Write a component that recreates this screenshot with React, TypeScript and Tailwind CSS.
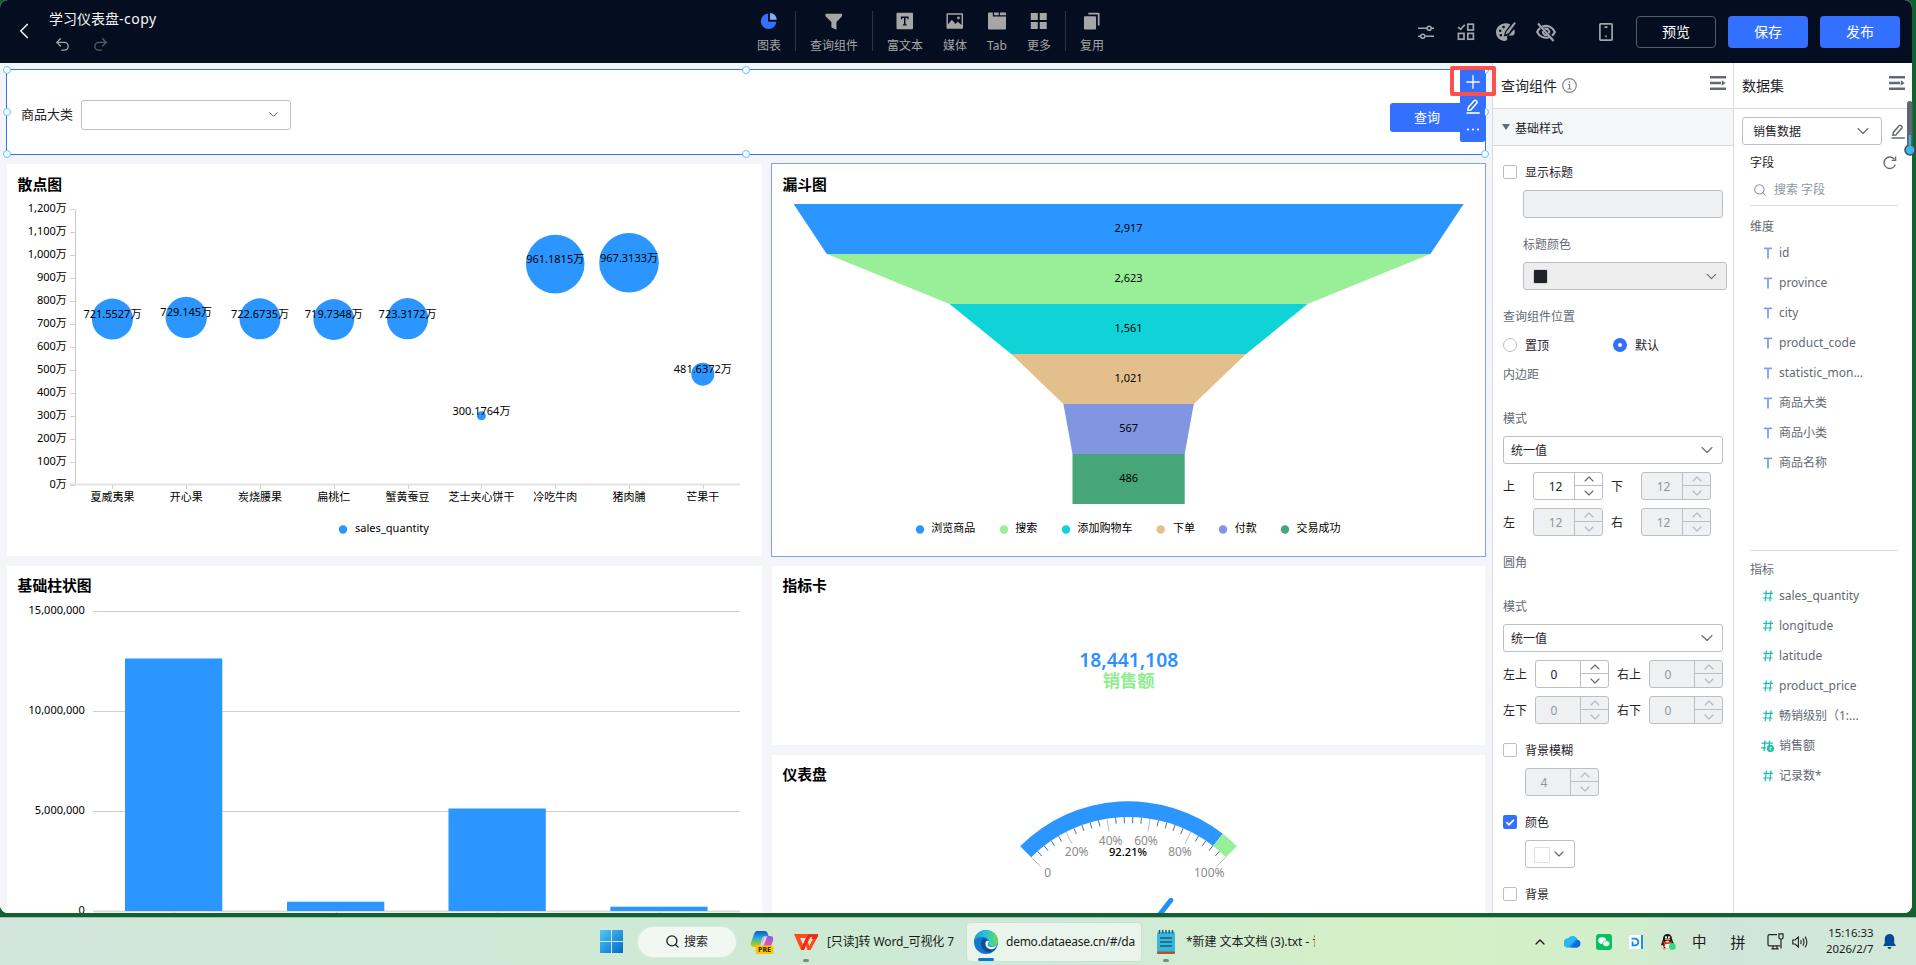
import React from "react";
import { ChevronDown, ChevronUp, ChevronLeft, Search, Undo2, Redo2 } from "lucide-react";

const FONT = "font-['Noto_Sans','Noto_Sans_CJK_SC',sans-serif]";

type LabelProps = {
  x: number;
  y: number;
  children: React.ReactNode;
  size?: number;
  anchor?: "start" | "middle" | "end";
  fill?: string;
  weight?: number;
  length?: number;
};

/** Chart label whose y is the vertical middle of the glyphs. */
function Label({ x, y, children, size = 11, anchor = "middle", fill = "#000", weight = 400, length }: LabelProps) {
  return (
    <text
      x={x}
      y={y + size * 0.36}
      fontSize={size}
      textAnchor={anchor}
      fill={fill}
      fontWeight={weight}
      textLength={length}
      lengthAdjust="spacingAndGlyphs"
    >
      {children}
    </text>
  );
}

/* ---------- top bar ---------- */

const toolIcons: Record<string, React.ReactNode> = {
  chart: (
    <>
      <path d="M8.3 1.2A8 8 0 1 0 16.8 9.8H8.3Z" fill="#3370ff" />
      <path d="M10.3 0.8V7.8H17.3A7.4 7.4 0 0 0 10.3 0.8Z" fill="#8ba9f7" />
    </>
  ),
  filter: <path d="M0.5 1.5H17.5V4L11.8 10V18L6.6 15.6V10L0.5 4Z" />,
  text: (
    <path fillRule="evenodd" d="M1.5 0.5H16.5Q17.5.5 17.5 1.5V16.5Q17.5 17.5 16.5 17.5H1.5Q.5 17.5.5 16.5V1.5Q.5.5 1.5.5ZM5 4.4V7.2H6.4V6H8.2V12.4H7V13.6H11V12.4H9.8V6H11.6V7.2H13V4.4Z" />
  ),
  media: (
    <path fillRule="evenodd" d="M1.5 1H16.5Q17.5 1 17.5 2V16Q17.5 17 16.5 17H1.5Q.5 17 .5 16V2Q.5 1 1.5 1ZM2 2.5V12.5L6 7.8L9.8 12L12 9.8L16 13V2.5ZM12.8 4.4A1.4 1.4 0 1 1 12.8 7.2A1.4 1.4 0 1 1 12.8 4.4Z" />
  ),
  tab: <path d="M0 1Q0 .2.8.2H5V4.4H18.5V16.8Q18.5 17.8 17.5 17.8H1Q0 17.8 0 16.8ZM6.2.2H11V3.2H6.2ZM12.2.2H17.6Q18.5.2 18.5 1V3.2H12.2Z" />,
  more: <path d="M.8.8H8V8H.8ZM10 .8H17.2V8H10ZM.8 10H8V17.2H.8ZM10 10H17.2V17.2H10Z" />,
  reuse: (
    <>
      <rect x="1" y="4" width="12.4" height="13.8" rx="0.8" />
      <path d="M5.5 0.4H16Q17 .4 17 1.4V13.5H15.2V2.2H5.5Z" />
    </>
  ),
};

function Tool({ icon, label, width }: { icon: string; label: string; width: string }) {
  return (
    <div className={`flex flex-col items-center ${width}`}>
      <svg width="18" height="18" viewBox="0 0 18.5 18" fill="#a6a6a6" className="mt-3">
        {toolIcons[icon]}
      </svg>
      <span className="mt-[7px] text-xs leading-[17px] whitespace-nowrap text-[#a6a6a6]">{label}</span>
    </div>
  );
}

function Divider() {
  return <div className="mt-[11px] h-10 w-px bg-[#2b3241]" />;
}

function TopBar() {
  return (
    <header className="flex h-[63px] shrink-0 bg-[#050e21]">
      <div className="flex w-[756px]">
        <ChevronLeft className="mt-[18px] ml-[11px] h-[26px] w-[26px] text-[#ebebeb]" strokeWidth={1.6} />
        <div className="ml-3 flex flex-col">
          <div className="mt-[9px] text-sm leading-5 text-[#f5f5f5]">
            学习仪表盘<span className="tracking-[0.5px]">-copy</span>
          </div>
          <div className="mt-[7px] ml-[5px] flex gap-[21px]">
            <Undo2 className="h-[17px] w-[17px] text-[#a6a6a6]" strokeWidth={1.9} />
            <Redo2 className="h-[17px] w-[17px] text-[#5a5c60]" strokeWidth={1.9} />
          </div>
        </div>
      </div>
      <div className="flex w-[670px]">
        <Tool icon="chart" label="图表" width="w-[26px] ml-0" />
        <div className="w-[13px]" />
        <Divider />
        <Tool icon="filter" label="查询组件" width="w-[76px]" />
        <Divider />
        <Tool icon="text" label="富文本" width="w-[64px]" />
        <Tool icon="media" label="媒体" width="w-[36px]" />
        <Tool icon="tab" label="Tab" width="w-[48px]" />
        <Tool icon="more" label="更多" width="w-[36px]" />
        <div className="w-[8px]" />
        <Divider />
        <Tool icon="reuse" label="复用" width="w-[52px]" />
      </div>
      <div className="-ml-[9px] flex h-[63px] items-center text-[#a0a4ab]">
        <svg width="18" height="18" viewBox="0 0 18 18" fill="none" stroke="currentColor" strokeWidth="1.6">
          <path d="M1 5.2H10M14.5 5.2H17M1 13.2H3.5M8.2 13.2H17" />
          <circle cx="12.2" cy="5.2" r="2" />
          <circle cx="5.8" cy="13.2" r="2" />
        </svg>
        <svg className="ml-[22px]" width="18" height="18" viewBox="0 0 18 18" fill="none" stroke="currentColor" strokeWidth="1.7">
          <path d="M1 4L3.6 6.4L7.8 1.8" />
          <rect x="10.8" y="1.2" width="5.6" height="5.8" />
          <rect x="1.4" y="10.4" width="5.6" height="5.8" />
          <rect x="10.8" y="10.4" width="5.6" height="5.8" />
        </svg>
        <svg className="ml-[21px]" width="20" height="20" viewBox="0 0 20 20" fill="currentColor">
          <path fillRule="evenodd" d="M14.4 2.4C8-.8 0 3.6 0 10.2C0 15 4 19 8.8 19C11 19 11.6 17.6 11 16C10.6 14.6 11.6 13.6 13 13.6H16.4C18.8 13.6 19.4 10 18.2 7.2L12.6 13.6L7.8 14.6L9.2 9.6L14.4 2.4ZM4.2 7.4A1.3 1.3 0 1 0 4.2 10A1.3 1.3 0 1 0 4.2 7.4ZM7.6 3.8A1.3 1.3 0 1 0 7.6 6.4A1.3 1.3 0 1 0 7.6 3.8ZM4.8 12A1.3 1.3 0 1 0 4.8 14.6A1.3 1.3 0 1 0 4.8 12Z" />
          <path d="M18.4 0L19.8 1.2L12.6 11.2L9.7 12.6L10.4 9.8Z" />
        </svg>
        <svg className="ml-[20px]" width="20" height="20" viewBox="0 0 20 20" fill="none" stroke="currentColor" strokeWidth="2.2">
          <path d="M6.4 4.6C11.6 2.6 16.6 5.4 18.8 10C18.2 11.4 17.2 12.6 16 13.6M13 15.2C8 16.8 3.4 14.4 1.2 10C1.8 8.6 2.8 7.2 4.2 6.2" />
          <path d="M8.4 6.8C11 5.8 13.8 8 13.2 11.4M11 13.2C8.6 13.6 6.6 11.6 6.8 9.2" />
          <path d="M2 1.4L17.6 19" />
        </svg>
        <svg className="ml-[43px]" width="14" height="18" viewBox="0 0 14 18" fill="none" stroke="currentColor" strokeWidth="1.7">
          <rect x="0.9" y="0.9" width="12.2" height="16.2" rx="0.8" />
          <path d="M5.5 4.2H8.5M6.2 13.4H7.8" />
        </svg>
        <button className="ml-[23px] h-8 w-20 rounded border border-[#555b67] text-sm text-white">预览</button>
        <button className="ml-3 h-8 w-20 rounded bg-[#3370ff] text-sm text-white">保存</button>
        <button className="ml-3 h-8 w-20 rounded bg-[#3370ff] text-sm text-white">发布</button>
      </div>
    </header>
  );
}

/* ---------- canvas ---------- */

const handles = [
  "-left-1 -top-1",
  "-left-1 top-[38px]",
  "-left-1 -bottom-1",
  "left-[735px] -top-1",
  "left-[735px] -bottom-1",
  "-right-1 -top-1",
  "-right-1 top-[38px]",
  "-right-1 -bottom-1",
];

function PencilIcon({ className }: { className?: string }) {
  return (
    <svg className={className} width="14" height="15" viewBox="0 0 14 15" fill="none" stroke="currentColor" strokeWidth="1.5">
      <path d="M8.3 1.6Q9 .8 9.8 1.5L10.8 2.4Q11.5 3.1 10.8 4L4.8 11L1.9 11.2L2.3 8.4Z" />
      <path d="M0.5 14H13.8" strokeWidth="1.6" />
    </svg>
  );
}

function QueryBar() {
  return (
    <div className="relative flex h-[86px] w-[1480px] items-center border border-[#3370ff] bg-white">
      <span className="mt-[6px] ml-[14px] w-[53px] text-[13px] whitespace-nowrap text-[#1f2329]">商品大类</span>
      <div className="mt-[5px] ml-[7px] flex h-[30px] w-[210px] items-center justify-end rounded-[3px] border border-[#bbbfc4] pr-[9px]">
        <ChevronDown className="h-[15px] w-[15px] text-[#646a73]" strokeWidth={1.6} />
      </div>
      <div className="mt-[11px] mr-[9px] ml-auto flex h-[29px] w-[86px] items-center rounded-[3px] bg-[#3370ff] pl-6 text-[13px] text-white">
        查询
      </div>
      {handles.map((p) => (
        <i key={p} className={`absolute h-2 w-2 rounded-full border border-[#59c7f9] bg-white ${p}`} />
      ))}
      <div className="absolute -top-px right-0 flex h-[73px] w-[25px] flex-col items-center rounded-[2px] bg-[#3370ff] text-white">
        <svg className="mt-[6px]" width="14" height="14" viewBox="0 0 14 14" stroke="currentColor" strokeWidth="1.3">
          <path d="M7 .3V13.7M.3 7H13.7" />
        </svg>
        <PencilIcon className="mt-[10px]" />
        <svg className="mt-[14px]" width="14" height="3" viewBox="0 0 14 3" fill="currentColor">
          <circle cx="2" cy="1.5" r="1.1" />
          <circle cx="7" cy="1.5" r="1.1" />
          <circle cx="12" cy="1.5" r="1.1" />
        </svg>
      </div>
      <div className="absolute -top-1 -right-[11px] h-[30px] w-[46px] rounded-[2px] border-4 border-[#ff5050]" />
    </div>
  );
}

const points: [string, number, string, number][] = [
  ["夏威夷果", 721.5527, "721.5527万", 20.5],
  ["开心果", 729.145, "729.145万", 20.7],
  ["炭烧腰果", 722.6735, "722.6735万", 20.5],
  ["扁桃仁", 719.7348, "719.7348万", 20.4],
  ["蟹黄蚕豆", 723.3172, "723.3172万", 20.6],
  ["芝士夹心饼干", 300.1764, "300.1764万", 4.5],
  ["冷吃牛肉", 961.1815, "961.1815万", 29.3],
  ["猪肉脯", 967.3133, "967.3133万", 29.8],
  ["芒果干", 481.6372, "481.6372万", 11.5],
];

function ScatterCard() {
  const step = 22.95;
  const base = 484.7;
  return (
    <svg className="block bg-white" width="755" height="392" viewBox="7 164 755 392">
      <Label x={17.6} y={184.5} size={14.8} anchor="start" weight={700}>散点图</Label>
      <path d="M75.5 209.5V484.5" stroke="#c8c8c8" />
      <path d="M70 484.5H740" stroke="#e3e3e3" strokeWidth="2" />
      {Array.from({ length: 13 }, (_, i) => (
        <g key={i}>
          <path d={`M70 ${Math.round(base - i * step) + 0.5}H75`} stroke="#d0d0d0" />
          <Label x={66.8} y={base - i * step - 1} anchor="end">
            {i === 0 ? "0万" : `${(i * 100).toLocaleString("en-US")}万`}
          </Label>
        </g>
      ))}
      {points.map(([name, v, , r], i) => {
        const cx = 75.5 + 73.8 * (i + 0.5);
        return (
          <g key={name}>
            <path d={`M${Math.round(cx) + 0.5} 485V489`} stroke="#d0d0d0" />
            <circle cx={cx} cy={base - (v / 100) * step} r={r} fill="#2b96ff" />
            <Label x={cx} y={497}>{name}</Label>
          </g>
        );
      })}
      {points.map(([name, v, text], i) => (
        <Label key={name} x={75.5 + 73.8 * (i + 0.5)} y={base - (v / 100) * step - 5}>{text}</Label>
      ))}
      <circle cx="343" cy="529.5" r="4.2" fill="#2b96ff" />
      <Label x={355} y={528} anchor="start" length={74}>sales_quantity</Label>
    </svg>
  );
}

const stages: [string, string, number, string, number, number][] = [
  ["浏览商品", "2,917", 335, "#2b96ff", 920, 931.3],
  ["搜索", "2,623", 301.8, "#98ef98", 1004, 1015.3],
  ["添加购物车", "1,561", 179, "#10d3d8", 1066, 1077.6],
  ["下单", "1,021", 117.4, "#e3c08b", 1160.7, 1173],
  ["付款", "567", 65.2, "#8196e1", 1223, 1234.8],
  ["交易成功", "486", 56.1, "#47a678", 1285, 1296.6],
];

function FunnelCard() {
  const c = 1128.6;
  return (
    <svg className="block bg-white outline outline-1 outline-[#7f9ff5]" width="713" height="392" viewBox="772 164 713 392">
      <Label x={782.4} y={184.5} size={14.8} anchor="start" weight={700}>漏斗图</Label>
      {stages.map(([name, value, half, color, dotX, textX], i) => {
        const top = 204 + i * 50;
        const next = i < 5 ? stages[i + 1][2] : half;
        return (
          <g key={name}>
            <path d={`M${c - half} ${top}H${c + half}L${c + next} ${top + 50}H${c - next}Z`} fill={color} />
            <Label x={c} y={top + 24}>{value}</Label>
            <circle cx={dotX} cy="529.5" r="4.2" fill={color} />
            <Label x={textX} y={528} anchor="start">{name}</Label>
          </g>
        );
      })}
    </svg>
  );
}

function BarCard() {
  const bars = [
    [125, 658.5],
    [287, 901.7],
    [448.5, 808.5],
    [610.3, 906.7],
  ];
  return (
    <svg className="block bg-white" width="755" height="347" viewBox="7 566 755 347">
      <Label x={17.6} y={586} size={14.8} anchor="start" weight={700}>基础柱状图</Label>
      {["15,000,000", "10,000,000", "5,000,000", "0"].map((t, i) => (
        <g key={t}>
          <path d={`M93 ${611.5 + i * 100}H740`} stroke={i === 3 ? "#d9d9d9" : "#cfcfcf"} strokeWidth={i === 3 ? 2 : 1} />
          <Label x={84.8} y={610 + i * 100} anchor="end">{t}</Label>
        </g>
      ))}
      {bars.map(([x, y]) => (
        <g key={x}>
          <path d={`M${Math.round(x + 48.6) + 0.5} 911V914`} stroke="#d0d0d0" />
          <rect x={x} y={y} width="97.3" height={911 - y} fill="#2b96ff" />
        </g>
      ))}
    </svg>
  );
}

function MetricCard() {
  return (
    <svg className="block bg-white" width="713" height="179" viewBox="772 566 713 179">
      <Label x={782.4} y={586} size={14.8} anchor="start" weight={700}>指标卡</Label>
      <Label x={1128.7} y={660} size={19} weight={600} fill="#2b90ff" length={99}>18,441,108</Label>
      <Label x={1128.7} y={680.5} size={17.3} weight={700} fill="#90ee90">销售额</Label>
    </svg>
  );
}

function polar(r: number, pct: number): string {
  const a = ((-45 + pct * 0.9) * Math.PI) / 180;
  return `${(1128.5 + r * Math.sin(a)).toFixed(2)} ${(954.5 - r * Math.cos(a)).toFixed(2)}`;
}

function band(from: number, to: number): string {
  return `M${polar(153.2, from)}A153.2 153.2 0 0 1 ${polar(153.2, to)}L${polar(137.6, to)}A137.6 137.6 0 0 0 ${polar(137.6, from)}Z`;
}

function GaugeCard() {
  const marks: [string, number, number][] = [
    ["0", 1047.7, 872.5],
    ["20%", 1076.7, 851.3],
    ["40%", 1110.7, 840.5],
    ["60%", 1146, 840.5],
    ["80%", 1180, 851.3],
    ["100%", 1209.3, 872.5],
  ];
  return (
    <svg className="block bg-white" width="713" height="158" viewBox="772 755 713 158">
      <Label x={782.4} y={775} size={14.8} anchor="start" weight={700}>仪表盘</Label>
      {Array.from({ length: 26 }, (_, i) => {
        const major = i % 5 === 0;
        return (
          <path
            key={i}
            d={`M${polar(137.6, i * 4)}L${polar(major ? 124.5 : 131.3, i * 4)}`}
            stroke={major ? "#bdbdbd" : "#4b6f96"}
          />
        );
      })}
      <path d={band(0, 92.21)} fill="#2b96ff" />
      <path d={band(92.21, 100)} fill="#98ef98" />
      {marks.map(([t, x, y]) => (
        <Label key={t} x={x} y={y} size={12} fill="#8c8c8c">{t}</Label>
      ))}
      <Label x={1128} y={852} size={11} weight={500} length={38}>92.21%</Label>
      <path d={`M${polar(68.8, 92.21)}L1128.5 954.5`} stroke="#2090ff" strokeWidth="5" strokeLinecap="round" />
    </svg>
  );
}

function Canvas() {
  return (
    <main className="relative z-10 flex w-[1492px] flex-col bg-[#f4f5f8] pt-[6px] pl-[6px]">
      <QueryBar />
      <div className="mt-[9px] ml-px flex gap-[10px]">
        <div className="flex flex-col gap-[10px]">
          <ScatterCard />
          <BarCard />
        </div>
        <div className="flex flex-col gap-[10px]">
          <FunnelCard />
          <MetricCard />
          <GaugeCard />
        </div>
      </div>
    </main>
  );
}

/* ---------- property panel ---------- */

function FoldIcon() {
  return (
    <svg width="16" height="14" viewBox="0 0 16 14" fill="#646a73">
      <path d="M0 0H16V2.4H0ZM0 5.8H11V8.2H0ZM0 11.6H16V14H0ZM11.8 4.2L15.6 7L11.8 9.8Z" />
    </svg>
  );
}

function Check({ label, checked = false, className }: { label: string; checked?: boolean; className: string }) {
  return (
    <div className={`flex h-[14px] items-center ${className}`}>
      {checked ? (
        <svg width="14" height="14" viewBox="0 0 14 14" className="rounded-[2px] bg-[#3370ff]">
          <path d="M3.4 7.2L6 9.8L10.8 4.8" fill="none" stroke="#fff" strokeWidth="1.8" />
        </svg>
      ) : (
        <div className="h-[14px] w-[14px] rounded-[2px] border border-[#bbbfc4] bg-white" />
      )}
      <span className="mt-[2px] ml-2 text-xs text-[#1f2329]">{label}</span>
    </div>
  );
}

function Caption({ children, className }: { children: React.ReactNode; className: string }) {
  return <div className={`h-[17px] shrink-0 text-xs leading-[18px] text-[#646a73] ${className}`}>{children}</div>;
}

function Stepper({ value, size, disabled = true }: { value: string; size: string; disabled?: boolean }) {
  const tone = disabled ? "bg-[#eff0f1] text-[#8f959e]" : "bg-white text-[#1f2329]";
  const arrow = disabled ? "text-[#b4b8bd]" : "text-[#646a73]";
  return (
    <div className={`flex h-7 overflow-hidden rounded-[3px] border border-[#bbbfc4] text-xs ${size} ${tone}`}>
      <div className={`flex flex-1 items-center justify-center pt-px ${value.length > 1 ? "pl-[3px]" : "pr-[8px]"}`}>{value}</div>
      <div className={`flex w-7 flex-col border-l border-[#bbbfc4] ${arrow}`}>
        <div className="flex h-[13px] items-center justify-center border-b border-[#bbbfc4]">
          <ChevronUp className="h-4 w-4" strokeWidth={1.7} />
        </div>
        <div className="flex h-[13px] items-center justify-center">
          <ChevronDown className="h-4 w-4" strokeWidth={1.7} />
        </div>
      </div>
    </div>
  );
}

function StepperRow({ labels, values, labelWidth, size, firstOn, gap }: { labels: string[]; values: string[]; labelWidth: string; size: string; firstOn: boolean; gap: string }) {
  return (
    <div className={`mt-2 flex h-7 items-center text-xs text-[#1f2329] ${gap}`}>
      {labels.map((l, i) => (
        <div key={l} className="flex items-center">
          <span className={`pt-[2px] ${labelWidth}`}>{l}</span>
          <Stepper value={values[i]} size={size} disabled={!(firstOn && i === 0)} />
        </div>
      ))}
    </div>
  );
}

function Select({ value, className }: { value: string; className: string }) {
  return (
    <div className={`flex h-7 items-center justify-between rounded-[3px] border border-[#bbbfc4] bg-white text-xs text-[#1f2329] ${className}`}>
      <span className="pt-px">{value}</span>
      <ChevronDown className="h-5 w-5 text-[#646a73]" strokeWidth={1.3} />
    </div>
  );
}

function PropertyPanel() {
  return (
    <section className="flex w-[241px] flex-col overflow-hidden border-l border-[#d9dbde] bg-white">
      <div className="flex h-[46px] shrink-0 items-center border-b border-[#d9dbde] pr-[7px] pl-2">
        <span className="text-sm text-[#1f2329]">查询组件</span>
        <svg className="ml-[5px]" width="15" height="15" viewBox="0 0 15 15" fill="none" stroke="#7f858e" strokeWidth="1.2">
          <circle cx="7.5" cy="7.5" r="6.8" />
          <path d="M7.5 3.2V4.8M6 6.5H7.6V11M5.6 11H9.5" />
        </svg>
        <div className="mb-[6px] ml-auto">
          <FoldIcon />
        </div>
      </div>
      <div className="flex h-[37px] shrink-0 items-center border-b border-[#d9dbde] bg-[#f5f6f7] pl-[9px] text-xs text-[#1f2329]">
        <svg width="8" height="6" viewBox="0 0 8 6" fill="#646a73">
          <path d="M0 0H8L4 6Z" />
        </svg>
        <span className="mt-[3px] ml-[5px]">基础样式</span>
      </div>
      <div className="flex flex-col pl-[10px]">
        <Check label="显示标题" className="mt-[19px]" />
        <div className="mt-[11px] ml-5 h-7 w-[200px] rounded-[3px] border border-[#bbbfc4] bg-[#eff0f1]" />
        <Caption className="mt-[18px] ml-5">标题颜色</Caption>
        <div className="mt-[9px] ml-5 flex h-7 w-[204px] items-center justify-between rounded-[3px] border border-[#bbbfc4] bg-[#eeeeee] pr-[6px] pl-[9px]">
          <div className="mt-px h-[15px] w-[15px] rounded-[2px] border border-[#d0d3d6] bg-[#1f2329]" />
          <ChevronDown className="h-[17px] w-[17px] text-[#646a73]" strokeWidth={1.6} />
        </div>
        <Caption className="mt-[18px]">查询组件位置</Caption>
        <div className="mt-[13px] flex h-[14px] items-center text-xs text-[#1f2329]">
          <div className="h-[14px] w-[14px] rounded-full border border-[#bbbfc4]" />
          <span className="mt-[2px] ml-2 w-[88px]">置顶</span>
          <div className="h-[14px] w-[14px] rounded-full border-[5px] border-[#3370ff] bg-white" />
          <span className="mt-[2px] ml-2">默认</span>
        </div>
        <Caption className="mt-[14px]">内边距</Caption>
        <Caption className="mt-[27px]">模式</Caption>
        <Select value="统一值" className="mt-[9px] w-[220px] pr-[5px] pl-[7px]" />
        <StepperRow labels={["上", "下"]} values={["12", "12"]} labelWidth="w-[30px]" size="w-[70px]" firstOn gap="gap-2" />
        <StepperRow labels={["左", "右"]} values={["12", "12"]} labelWidth="w-[30px]" size="w-[70px]" firstOn={false} gap="gap-2" />
        <Caption className="mt-[18px]">圆角</Caption>
        <Caption className="mt-[27px]">模式</Caption>
        <Select value="统一值" className="mt-[9px] w-[220px] pr-[5px] pl-[7px]" />
        <StepperRow labels={["左上", "右上"]} values={["0", "0"]} labelWidth="w-[32px]" size="w-[74px]" firstOn gap="gap-2" />
        <StepperRow labels={["左下", "右下"]} values={["0", "0"]} labelWidth="w-[32px]" size="w-[74px]" firstOn={false} gap="gap-2" />
        <Check label="背景模糊" className="mt-[19px]" />
        <div className="mt-[11px] ml-[22px]">
          <Stepper value="4" size="w-[74px]" />
        </div>
        <Check label="颜色" checked className="mt-[19px]" />
        <div className="mt-[11px] ml-[22px] flex h-7 w-[50px] items-center rounded-[3px] border border-[#bbbfc4] pl-2">
          <div className="mt-px h-4 w-4 rounded-[1px] border border-[#dee0e3]" />
          <ChevronDown className="ml-[1px] h-4 w-4 text-[#646a73]" strokeWidth={1.7} />
        </div>
        <Check label="背景" className="mt-[19px]" />
      </div>
    </section>
  );
}

/* ---------- data set panel ---------- */

function TextGlyph() {
  return (
    <svg width="12" height="12" viewBox="0 0 12 12" stroke="#7f9ff7" fill="none">
      <path d="M2 1.4H10" strokeWidth="1.7" />
      <path d="M6 1.4V11.4" strokeWidth="1.8" />
    </svg>
  );
}

function HashGlyph({ computed }: { computed?: boolean }) {
  if (computed) {
    return (
      <svg width="13" height="12" viewBox="0 0 13 12" stroke="#1dbfa8" fill="none" strokeWidth="1.3" className="-ml-px">
        <path d="M4 .5L3.2 11M8.6 .5L8.2 5M.6 3.2H11.8M0 7.8H5" />
        <circle cx="9.4" cy="8.4" r="2.9" fill="#1dbfa8" />
        <path d="M9.2 10.2V7.4H10.6" stroke="#fff" strokeWidth=".9" />
      </svg>
    );
  }
  return (
    <svg width="12" height="12" viewBox="0 0 12 12" stroke="#1dbfa8" fill="none" strokeWidth="1.2">
      <path d="M4.4 .5L3.2 11.2M9 .5L7.8 11.2M1.4 3.4H11M.8 8H10.4" />
    </svg>
  );
}

const dims = ["id", "province", "city", "product_code", "statistic_mon...", "商品大类", "商品小类", "商品名称"];
const measures = ["sales_quantity", "longitude", "latitude", "product_price", "畅销级别（1:...", "销售额", "记录数*"];

function Field({ icon, name }: { icon: React.ReactNode; name: string }) {
  return (
    <li className="flex h-[30px] items-center pl-[28px]">
      <span className="w-[17px]">{icon}</span>
      <span className="text-xs whitespace-nowrap text-[#646a73]">{name}</span>
    </li>
  );
}

function DatasetPanel() {
  return (
    <section className="relative flex w-[179px] flex-col border-l border-[#d9dbde] bg-white">
      <div className="flex h-[46px] shrink-0 items-center border-b border-[#d9dbde] pr-[7px] pl-2">
        <span className="text-sm text-[#1f2329]">数据集</span>
        <div className="mb-[6px] ml-auto">
          <FoldIcon />
        </div>
      </div>
      <div className="mt-2 flex items-center pl-2">
        <Select value="销售数据" className="w-[140px] pr-2 pl-[10px]" />
        <PencilIcon className="ml-[9px] text-[#646a73]" />
      </div>
      <div className="mt-[9px] flex h-[17px] items-center justify-between pr-[15px] pl-4 text-xs text-[#1f2329]">
        字段
        <svg width="14" height="14" viewBox="0 0 14 14" fill="none" stroke="#646a73" strokeWidth="1.4">
          <path d="M12.3 8.6A5.8 5.8 0 1 1 11.4 3.2" />
          <path d="M12.6 .4V4.4H8.6" />
        </svg>
      </div>
      <div className="ml-4 flex h-[35px] w-[148px] items-center border-b border-[#dcdee1] pt-[3px] pl-[3px] text-xs text-[#8f959e]">
        <Search className="h-[14px] w-[14px]" strokeWidth={1.8} />
        <span className="ml-[7px]">搜索 字段</span>
      </div>
      <Caption className="mt-3 pl-4">维度</Caption>
      <ul className="mt-[3px]">
        {dims.map((d) => (
          <Field key={d} icon={<TextGlyph />} name={d} />
        ))}
      </ul>
      <div className="mt-[72px] ml-4 h-px w-[148px] bg-[#dcdee1]" />
      <Caption className="mt-[10px] pl-4">指标</Caption>
      <ul className="mt-[3px]">
        {measures.map((m) => (
          <Field key={m} icon={<HashGlyph computed={m === "销售额"} />} name={m} />
        ))}
      </ul>
    </section>
  );
}

/* ---------- taskbar ---------- */

function TaskDot() {
  return <i className="absolute -bottom-[8px] left-1/2 h-[3px] w-[6px] -translate-x-1/2 rounded-full bg-[#7b8a80]" />;
}

function Taskbar() {
  return (
    <footer className="flex h-12 items-center border-t border-[#a5bfae] bg-[linear-gradient(90deg,#d3e6dc_0%,#cfe8d6_20%,#cdead3_45%,#cfe8dc_55%,#d2ecd2_62%,#d5f0c6_72%,#d2efca_84%,#d0e5da_90%,#d2e9d8_100%)] text-xs text-[#1a1a1a]">
      <svg className="ml-[600px]" width="23" height="23" viewBox="0 0 23 23">
        <defs>
          <linearGradient id="win" x1="0" y1="0" x2="1" y2="1">
            <stop offset="0" stopColor="#51c8fb" />
            <stop offset="1" stopColor="#0069c8" />
          </linearGradient>
        </defs>
        <path d="M0 0H11V11H0ZM12 0H23V11H12ZM0 12H11V23H0ZM12 12H23V23H12Z" fill="url(#win)" />
      </svg>
      <div className="ml-[15px] flex h-[30px] w-[98px] items-center rounded-full bg-[#f0f8f1] pl-[27px] shadow-[0_0_0_1px_#dbeade]">
        <Search className="h-[15px] w-[15px]" strokeWidth={2.1} />
        <span className="mt-px ml-[4px]">搜索</span>
      </div>
      <svg className="ml-[14px]" width="24" height="24" viewBox="0 0 24 24">
        <defs>
          <linearGradient id="cpa" x1="0" y1="0" x2="0" y2="1">
            <stop offset="0" stopColor="#1257c8" />
            <stop offset=".4" stopColor="#22a5e0" />
            <stop offset=".75" stopColor="#7fc94a" />
            <stop offset="1" stopColor="#f4c20d" />
          </linearGradient>
          <linearGradient id="cpb" x1="0" y1="0" x2="0" y2="1">
            <stop offset="0" stopColor="#8a5cf5" />
            <stop offset=".5" stopColor="#e0559f" />
            <stop offset="1" stopColor="#ff8a4a" />
          </linearGradient>
        </defs>
        <path d="M7 1H15Q17 1 18 4L18.5 6H15Q13 6 12 9L9.8 17H4Q0 17 1 12.5L4 4Q5 1 7 1Z" fill="url(#cpa)" />
        <path d="M15.5 6H20Q24 6 23 10.5L20.5 18Q19 22 16 22H7.5Q9.6 21 10.4 18L13 8.5Q13.8 6 15.5 6Z" fill="url(#cpb)" />
        <path d="M14.2 6.4L17.4 6.2L13.2 16.4L10.6 17Z" fill="#f4f4fa" opacity=".75" />
        <rect x="5.5" y="15.4" width="18" height="8.6" rx="2" fill="#ffc400" />
        <text x="14.5" y="22.2" fontSize="7" fontWeight="700" textAnchor="middle" fill="#222">PRE</text>
      </svg>
      <div className="relative ml-[20px]">
        <svg width="24" height="24" viewBox="0 0 24 24">
          <path d="M0 4H13.5L11.5 8H6L9 14.5L13.6 4.2H24V6L16.6 20H13.4L11.8 15.6L10 20H7Z" fill="#ff4a1c" />
          <path d="M14 12L17 6.8H20L15.2 16Z" fill="#d5ead8" />
          <path d="M13.6 4.2H24V6L22.4 9H17.4L18.4 6.8H15.4L10 20H7Z" fill="#f02818" />
        </svg>
        <TaskDot />
      </div>
      <span className="ml-[9px] w-[140px] tracking-[-0.1px] whitespace-nowrap">[只读]转 Word_可视化 7</span>
      <div className="flex h-[38px] w-[174px] items-center rounded bg-[#e9f5ea] pl-[7px] shadow-[0_0_0_1px_#cfe0d2]">
        <div className="relative">
          <svg width="24" height="24" viewBox="0 0 24 24">
            <defs>
              <linearGradient id="ea" x1="0" y1="0" x2="1" y2="0">
                <stop offset="0" stopColor="#1b9de2" />
                <stop offset=".5" stopColor="#2bc3d2" />
                <stop offset="1" stopColor="#6bdc55" />
              </linearGradient>
            </defs>
            <circle cx="12" cy="12" r="12" fill="#1577cf" />
            <path d="M.4 9.6C2 3.6 6.4 0 12 0C19 0 24 5 24 11C24 14.6 21 16.6 18 16.6C15 16.6 13.6 15.2 14.6 13.6C16.4 10 13 7 8.6 7C5 7 2 8 .4 9.6Z" fill="url(#ea)" />
            <path d="M9.2 8.6C6 11 6.6 17.6 10.4 21C13.6 23.6 18.6 22.4 22 18.4C17.4 20.2 12 18 11.4 13.8C11.2 12.2 12 11 12.8 10.4C12.4 8.6 10.6 8 9.2 8.6Z" fill="#0c4f96" />
            <path d="M15 11.2C15 13 13 13.6 14 15.4C15.4 17.8 20.6 17.6 23 14.8C22 17.6 20.4 18.6 19 19.2C14.6 19.8 11.4 17.2 11.4 13.8C11.4 11.4 13 10 15 11.2Z" fill="#e9f5ea" />
          </svg>
          <i className="absolute -bottom-[7px] left-1 h-[3px] w-4 rounded-full bg-[#0a78d4]" />
        </div>
        <span className="ml-2 tracking-[-0.25px] whitespace-nowrap">demo.dataease.cn/#/da</span>
      </div>
      <div className="relative ml-4">
        <svg width="18" height="24" viewBox="0 0 18 24">
          <rect x="0" y="2" width="18" height="21" rx="1.5" fill="#3cb6d8" />
          <rect x="0" y="21.5" width="18" height="2.5" rx="1" fill="#a8562a" />
          <path d="M2.5 0V3.4M5.7 0V3.4M9 0V3.4M12.2 0V3.4M15.5 0V3.4" stroke="#0b5d7e" strokeWidth="1.5" />
          <path d="M3 8H15M3 12H15M3 16H15" stroke="#0c6486" strokeWidth="1.4" />
        </svg>
        <TaskDot />
      </div>
      <span className="ml-[11px] w-[129px] overflow-hidden tracking-[-0.05px] whitespace-nowrap">*新建 文本文档 (3).txt - 记</span>
      <ChevronUp className="ml-[217px] h-4 w-4" strokeWidth={2} />
      <svg className="ml-4" width="17" height="13" viewBox="0 0 17 13">
        <path d="M4 3.6A5.3 5.3 0 0 1 13.4 4.8A4 4 0 0 1 13 12.6H4A4.4 4.4 0 0 1 4 3.6Z" fill="#1590ee" />
        <path d="M4 3.6A5.3 5.3 0 0 1 12.6 3.6L4 12.6A4.4 4.4 0 0 1 4 3.6Z" fill="#29b8f7" />
        <path d="M7 12.6L13.4 4.8A4 4 0 0 1 13 12.6Z" fill="#1466e0" />
      </svg>
      <svg className="ml-[15px]" width="16" height="16" viewBox="0 0 16 16">
        <rect width="16" height="16" rx="3" fill="#07c160" />
        <ellipse cx="6.2" cy="6.6" rx="4" ry="3.4" fill="#fff" />
        <ellipse cx="10.2" cy="9.6" rx="3.6" ry="3" fill="#e8f8ee" stroke="#07c160" strokeWidth=".6" />
      </svg>
      <svg className="ml-[17px]" width="14" height="14" viewBox="0 0 14 14">
        <rect width="14" height="14" rx="1.5" fill="#fff" />
        <rect x="12" width="2" height="14" fill="#1f8fe8" />
        <path d="M2.6 3.6H6A3.4 3.4 0 0 1 6 10.4H3.6V6.6" fill="none" stroke="#1488e8" strokeWidth="1.8" />
      </svg>
      <svg className="ml-[17px]" width="16" height="16" viewBox="0 0 16 16">
        <path d="M7.5 0C10.4 0 12 2 12 5L14 10L12 11L11 14H4L3 11L1 11.4L3 5C3 2 4.6 0 7.5 0Z" fill="#151515" />
        <ellipse cx="7.4" cy="10.6" rx="3.4" ry="3.6" fill="#fff" />
        <ellipse cx="6" cy="3.4" rx=".9" ry="1.3" fill="#fff" />
        <ellipse cx="9" cy="3.4" rx=".9" ry="1.3" fill="#fff" />
        <path d="M4.6 5.6Q7.5 7.4 10.6 5.6L9.6 4.8H5.4Z" fill="#f6a81c" />
        <path d="M2.8 7Q7.5 9.4 12.2 7V8.6Q7.5 11 5 10V12L3.4 11.8L3.6 9.4Z" fill="#e03030" />
        <circle cx="12.4" cy="12.4" r="3.4" fill="#2edc82" />
        <path d="M2 14.6Q4 13.4 7 14.6Q5 16.4 2 14.6Z" fill="#f08a1c" />
      </svg>
      <span className="ml-[16px] text-[14.5px]">中</span>
      <span className="ml-[24px] text-[15px]">拼</span>
      <svg className="ml-[21px]" width="17" height="17" viewBox="0 0 17 17" fill="none" stroke="#222" strokeWidth="1.2">
        <path d="M10 1.6H2.4Q1 1.6 1 3V11.4Q1 12.8 2.4 12.8H13M6 13V15.6M10 13V15.6M4.4 15.8H11.6" />
        <path d="M12 .8H16V4.6Q16 6 14.6 6H13.4Q12 6 12 4.6ZM14 6V15.4" />
      </svg>
      <svg className="ml-[8px]" width="17" height="14" viewBox="0 0 17 14" fill="none" stroke="#222" strokeWidth="1.1">
        <path d="M.8 5V9H3L6.4 12V2L3 5ZM8.6 5Q9.8 7 8.6 9M10.8 3.4Q13.2 7 10.8 10.6M13 1.6Q16.8 7 13 12.4" />
      </svg>
      <div className="mb-[2px] ml-[12px] flex w-[53px] flex-col items-end text-[11.4px] leading-4 whitespace-nowrap">
        <span>15:16:33</span>
        <span>2026/2/7</span>
      </div>
      <svg className="ml-[9px]" width="13" height="15" viewBox="0 0 13 15" fill="#05489c">
        <path d="M6.5 0C9.6 0 11.2 2.2 11.2 5V9L13 12H0L1.8 9V5C1.8 2.2 3.4 0 6.5 0ZM4.4 13H8.6Q8.2 15 6.5 15T4.4 13Z" />
      </svg>
    </footer>
  );
}

export default function App() {
  return (
    <div className={`relative flex h-[965px] w-[1916px] flex-col overflow-hidden bg-[#11622f] ${FONT}`}>
      <div className="mb-1 flex h-[913px] w-[1912px] flex-col overflow-hidden rounded-lg bg-white">
        <TopBar />
        <div className="flex min-h-0 flex-1">
          <Canvas />
          <PropertyPanel />
          <DatasetPanel />
        </div>
      </div>
      <Taskbar />
      <svg className="absolute top-[100px] right-0" width="12" height="57" viewBox="0 0 12 57">
        <rect x="3" y="1" width="5.5" height="50" rx="2.7" fill="#5d6772" />
        <circle cx="6" cy="50" r="5.8" fill="#45525e" />
        <circle cx="6" cy="50" r="4.2" fill="#38b8ec" />
        <rect x="4.8" y="35" width="2" height="14" fill="#38b8ec" />
      </svg>
    </div>
  );
}
